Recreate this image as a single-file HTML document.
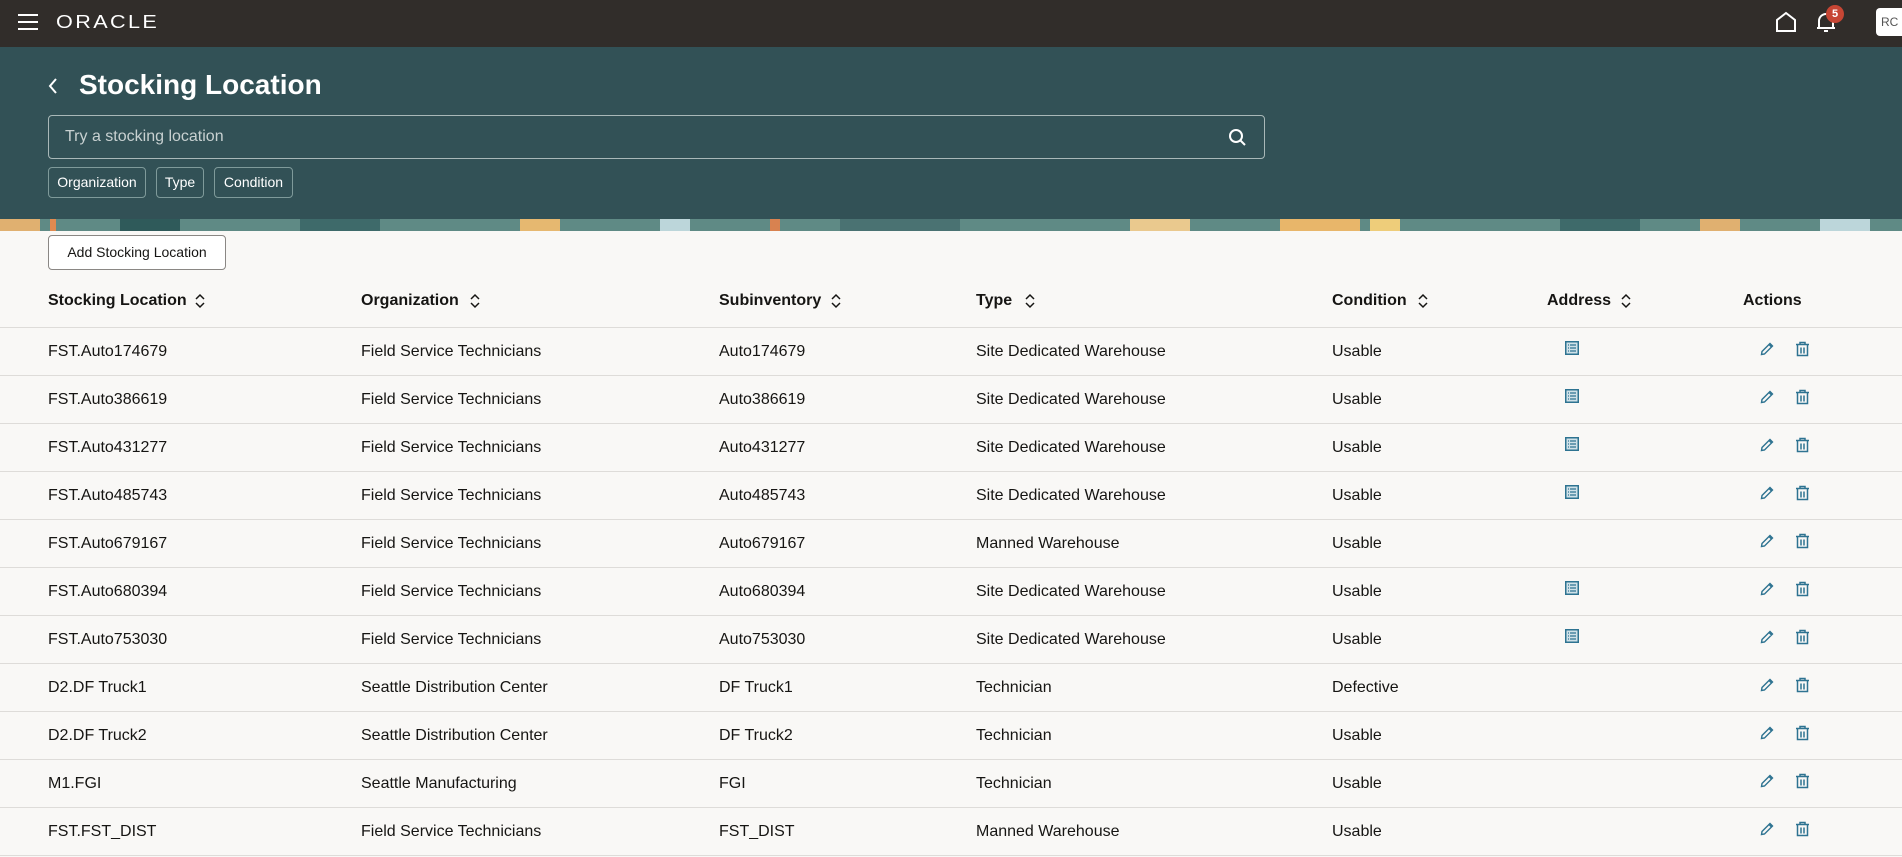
<!DOCTYPE html>
<html><head><meta charset="utf-8"><style>
*{box-sizing:border-box;margin:0;padding:0}
body{width:1902px;height:857px;overflow:hidden;background:#f9f8f6;font-family:"Liberation Sans",sans-serif;color:#161513;position:relative}
.top{position:absolute;left:0;top:0;width:1902px;height:47px;background:#312d2a}
.teal{position:absolute;left:0;top:47px;width:1902px;height:172px;background:#325156}
.band{position:absolute;left:0;top:219px;width:1902px;height:12px;background:#5f8a85;overflow:hidden}
.band i{position:absolute;top:0;height:12px;display:block}
.abs{position:absolute}
.title{left:79px;top:69px;font-size:28px;font-weight:bold;color:#fff}
.search{left:48px;top:115px;width:1217px;height:44px;border:1px solid #a9b8b8;border-radius:4px}
.search span{position:absolute;left:16px;top:12px;font-size:16px;color:#c8d1d1}
.chip{top:167px;height:31px;border:1px solid #7f9a9a;border-radius:4px;color:#fff;font-size:14px;line-height:29px;text-align:center}
.btn{left:48px;top:235px;width:178px;height:35px;border:1px solid #8a8784;border-radius:4px;font-size:14px;line-height:33px;text-align:center;background:#fff}
.th{top:292px;font-size:16px;font-weight:bold}
.line{left:0;width:1902px;height:1px;background:#dedcd9}
.td{font-size:16px}
</style></head><body>
<div class="top">
<div class="abs" style="left:18px;top:14px;width:20px;height:2px;background:#fff"></div>
<div class="abs" style="left:18px;top:21px;width:20px;height:2px;background:#fff"></div>
<div class="abs" style="left:18px;top:28px;width:20px;height:2px;background:#fff"></div>
<div class="abs" style="left:56px;top:12px;color:#fff;font-size:18px;letter-spacing:2px;transform:scaleX(1.2);transform-origin:left">ORACLE</div>
<svg class="abs" style="left:1774px;top:11px" width="24" height="22"><path d="M3 20V9L12 2L21 9V20Z" fill="none" stroke="#fff" stroke-width="2"/></svg>
<svg class="abs" style="left:1814px;top:10px" width="24" height="24"><path d="M5 18V11a7 7 0 0 1 14 0v7H3h18M10 21h4" fill="none" stroke="#fff" stroke-width="2"/></svg>
<div class="abs" style="left:1826px;top:5px;width:18px;height:18px;border-radius:50%;background:#c74634;color:#fff;font-size:11px;font-weight:bold;text-align:center;line-height:18px">5</div>
<div class="abs" style="left:1876px;top:8px;width:30px;height:28px;border-radius:4px;background:#fff;color:#555;font-size:12px;line-height:28px;padding-left:5px">RC</div>
</div>
<div class="teal">
<svg class="abs" style="left:46px;top:30px" width="14" height="18"><path d="M10 2L4 9L10 16" fill="none" stroke="#fff" stroke-width="2"/></svg>
</div>
<div class="abs title">Stocking Location</div>
<div class="abs search"><span>Try a stocking location</span>
<svg class="abs" style="left:1179px;top:12px" width="20" height="20"><circle cx="8" cy="8" r="6" fill="none" stroke="#fff" stroke-width="2"/><path d="M12.5 12.5L17 17" stroke="#fff" stroke-width="2"/></svg></div>
<div class="abs chip" style="left:48px;width:98px">Organization</div>
<div class="abs chip" style="left:156px;width:48px">Type</div>
<div class="abs chip" style="left:214px;width:79px">Condition</div>
<div class="band">
<i style="left:0;width:40px;background:#e0b070"></i><i style="left:50px;width:6px;background:#e08a50"></i><i style="left:120px;width:60px;background:#2f5a5a"></i><i style="left:300px;width:80px;background:#3e6a6a"></i><i style="left:520px;width:40px;background:#e6b870"></i><i style="left:660px;width:30px;background:#bcd6da"></i><i style="left:770px;width:10px;background:#d88250"></i><i style="left:840px;width:120px;background:#4a7272"></i><i style="left:1130px;width:60px;background:#eac98e"></i><i style="left:1280px;width:80px;background:#e8b66a"></i><i style="left:1370px;width:30px;background:#eecd7a"></i><i style="left:1560px;width:80px;background:#3e6a6a"></i><i style="left:1700px;width:40px;background:#e0b070"></i><i style="left:1820px;width:50px;background:#bcd6da"></i>
</div>
<div class="abs btn">Add Stocking Location</div>
<div id="t"></div>
<script>
var cols=[48,361,719,976,1332];
var hd=["Stocking Location","Organization","Subinventory","Type","Condition","Address"];
var hx=[48,361,719,976,1332,1547];
var sx=[195,470,831,1025,1418,1621];
var h="";
var sort='<svg width="10" height="16"><path d="M1 6L5 2L9 6M1 10L5 14L9 10" fill="none" stroke="#161513" stroke-width="1.5"/></svg>';
for(var i=0;i<6;i++){h+='<div class="abs th" style="left:'+hx[i]+'px">'+hd[i]+'</div><div class="abs" style="left:'+sx[i]+'px;top:293px">'+sort+'</div>';}
h+='<div class="abs th" style="left:1743px">Actions</div>';
var rows=[["FST.Auto174679","Field Service Technicians","Auto174679","Site Dedicated Warehouse","Usable",1],
["FST.Auto386619","Field Service Technicians","Auto386619","Site Dedicated Warehouse","Usable",1],
["FST.Auto431277","Field Service Technicians","Auto431277","Site Dedicated Warehouse","Usable",1],
["FST.Auto485743","Field Service Technicians","Auto485743","Site Dedicated Warehouse","Usable",1],
["FST.Auto679167","Field Service Technicians","Auto679167","Manned Warehouse","Usable",0],
["FST.Auto680394","Field Service Technicians","Auto680394","Site Dedicated Warehouse","Usable",1],
["FST.Auto753030","Field Service Technicians","Auto753030","Site Dedicated Warehouse","Usable",1],
["D2.DF Truck1","Seattle Distribution Center","DF Truck1","Technician","Defective",0],
["D2.DF Truck2","Seattle Distribution Center","DF Truck2","Technician","Usable",0],
["M1.FGI","Seattle Manufacturing","FGI","Technician","Usable",0],
["FST.FST_DIST","Field Service Technicians","FST_DIST","Manned Warehouse","Usable",0]];
var c="#2e7391";
var addr='<svg width="14" height="14"><rect x="0.75" y="0.75" width="12.5" height="12.5" fill="#cfe1e8" stroke="'+c+'" stroke-width="1.5"/><path d="M3 4h1M5 4h6M3 7h1M5 7h6M3 10h1M5 10h6" stroke="'+c+'" stroke-width="1.3"/></svg>';
var pen='<svg width="14" height="14"><path d="M1.5 12.5L2 9.5L10 1.5L12.5 4L4.5 12Z M9 2.5L11.5 5" fill="none" stroke="'+c+'" stroke-width="1.4"/></svg>';
var tr='<svg width="15" height="16"><path d="M1 3.5h13M5 3.5V1.5h5v2M2.5 3.5v11h10v-11M6 6.5v6M9 6.5v6" fill="none" stroke="'+c+'" stroke-width="1.5"/></svg>';
for(var r=0;r<rows.length;r++){var y=327+48*r;h+='<div class="abs line" style="top:'+y+'px"></div>';
for(var k=0;k<5;k++)h+='<div class="abs td" style="left:'+cols[k]+'px;top:'+(y+16)+'px">'+rows[r][k]+'</div>';
if(rows[r][5])h+='<div class="abs" style="left:1565px;top:'+(y+14)+'px">'+addr+'</div>';
h+='<div class="abs" style="left:1760px;top:'+(y+15)+'px">'+pen+'</div><div class="abs" style="left:1795px;top:'+(y+14)+'px">'+tr+'</div>';}
h+='<div class="abs line" style="top:855px"></div>';
document.getElementById("t").innerHTML=h;
</script>
</body></html>
